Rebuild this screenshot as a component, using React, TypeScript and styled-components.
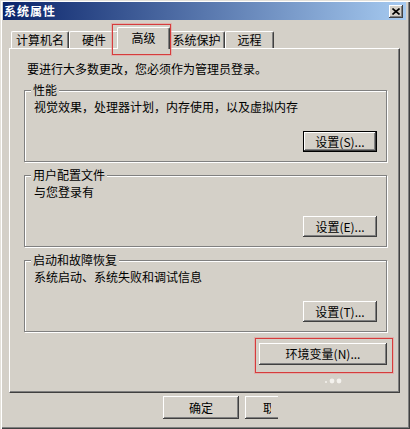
import React from "react";
import styled, { createGlobalStyle, css } from "styled-components";

const FONT = `"Noto Sans CJK SC", "Noto Sans", sans-serif`;
const FACE = "#d4d0c8";

const Global = createGlobalStyle`
  html, body { margin: 0; padding: 0; background: ${FACE}; }
  body { font-family: ${FONT}; font-size: 12px; color: #000; }
  #root { width: 410px; height: 429px; }
  * { box-sizing: border-box; }
`;

const Window = styled.div`
  width: 410px;
  height: 429px;
  background: ${FACE};
  padding: 2px 4px 3px 3px;
  display: flex;
  flex-direction: column;
  overflow: hidden;
  box-shadow: inset 1px 1px 0 #e4e1da, inset 2px 2px 0 #fff,
    inset -1px -1px 0 #404040, inset -2px -2px 0 #808080;
`;

const TitleBar = styled.div`
  height: 18px;
  display: flex;
  align-items: center;
  justify-content: space-between;
  padding: 0 3px 0 1px;
  background: linear-gradient(to right, #0a246a, #a6caf0);
`;

const Title = styled.span`
  color: #fff;
  font-weight: 700;
  font-size: 12px;
  letter-spacing: 1px;
  line-height: 18px;
`;

const CloseBtn = styled.div`
  width: 14px;
  height: 13px;
  background: ${FACE};
  display: flex;
  align-items: center;
  justify-content: center;
  box-shadow: inset -1px -1px 0 #404040, inset 1px 1px 0 #fff,
    inset -2px -2px 0 #808080;
`;

const Body = styled.div`
  display: flex;
  flex-direction: column;
  padding: 7px 6px 0 6px;
`;

const TabStrip = styled.div`
  display: flex;
  align-items: flex-end;
  height: 21px;
  padding-left: 2px;
  position: relative;
  z-index: 1;
`;

const Tab = styled.div<{ $w: number; $active?: boolean; $highlight?: boolean }>`
  position: relative;
  width: ${(p) => p.$w}px;
  height: 17px;
  background: ${FACE};
  border-top: 1px solid #fff;
  border-left: 1px solid #fff;
  border-right: 1px solid #404040;
  border-radius: 2px 2px 0 0;
  box-shadow: inset -1px 0 0 #808080;
  text-align: center;
  line-height: 14px;
  padding-top: 1px;
  white-space: nowrap;
  ${(p) =>
    p.$active &&
    css`
      height: 22px;
      margin: 0 -2px -1px -2px;
      width: ${p.$w + 4}px;
      padding-top: 3px;
      z-index: 2;
    `}
  ${(p) =>
    p.$highlight &&
    css`
      &::after {
        content: "";
        position: absolute;
        top: -4px;
        right: -2px;
        bottom: -6px;
        left: -6px;
        border: 1px solid #d63c3c;
        box-shadow: 0 0 0 1px rgba(236, 140, 140, 0.45);
        pointer-events: none;
      }
    `}
`;

const Panel = styled.div`
  height: 345px;
  border-top: 1px solid #fff;
  border-left: 1px solid #fff;
  border-right: 1px solid #404040;
  border-bottom: 1px solid #404040;
  box-shadow: inset -1px -1px 0 #808080;
  padding: 13px 12px 0 14px;
  display: flex;
  flex-direction: column;
`;

const Notice = styled.div`
  margin-left: 3px;
  line-height: 14px;
`;

const Group = styled.div<{ $gap: number }>`
  position: relative;
  height: 72px;
  margin-top: ${(p) => p.$gap}px;
  border: 1px solid #808080;
  box-shadow: inset 1px 1px 0 #fff, 1px 1px 0 #fff;
  padding: 9px;
  display: flex;
  flex-direction: column;
`;

const Legend = styled.span`
  position: absolute;
  top: -8px;
  left: 6px;
  padding: 0 2px;
  background: ${FACE};
  line-height: 14px;
`;

const Desc = styled.div`
  line-height: 14px;
`;

const ButtonRow = styled.div<{ $top?: number }>`
  display: flex;
  justify-content: flex-end;
  margin-top: ${(p) => (p.$top === undefined ? "auto" : `${p.$top}px`)};
`;

const Button = styled.button<{ $w: number; $h: number; $default?: boolean; $start?: boolean }>`
  width: ${(p) => p.$w}px;
  height: ${(p) => p.$h}px;
  flex: none;
  font-family: ${FONT};
  font-size: 12px;
  line-height: 14px;
  color: #000;
  background: ${FACE};
  border: none;
  padding: 0;
  display: flex;
  align-items: center;
  justify-content: ${(p) => (p.$start ? "flex-start" : "center")};
  white-space: nowrap;
  box-shadow: inset -1px -1px 0 #404040, inset 1px 1px 0 #fff,
    inset -2px -2px 0 #808080;
  ${(p) =>
    p.$default &&
    css`
      border: 1px solid #000;
    `}
`;

const Highlight = styled.div`
  position: relative;
  display: flex;
  &::after {
    content: "";
    position: absolute;
    top: -5px;
    right: -6px;
    bottom: -8px;
    left: -4px;
    border: 1px solid #d63c3c;
    box-shadow: 0 0 0 1px rgba(236, 140, 140, 0.45);
    pointer-events: none;
  }
`;

const DotsRow = styled.div`
  display: flex;
  justify-content: flex-end;
  margin-top: 13px;
  padding-right: 43px;
`;

const Footer = styled.div`
  display: flex;
  gap: 6px;
  margin-top: 3px;
  padding-left: 154px;
`;

const Clip = styled.div`
  width: 33px;
  height: 23px;
  overflow: hidden;
  display: flex;
`;

const CutLabel = styled.span`
  width: 8px;
  overflow: hidden;
  margin-left: 18px;
  white-space: nowrap;
`;

export default function App() {
  return (
    <>
      <Global />
      <Window>
        <TitleBar>
          <Title>系统属性</Title>
          <CloseBtn>
            <svg width="8" height="7" viewBox="0 0 8 7">
              <path d="M0.5 0.5 L7.5 6.5 M7.5 0.5 L0.5 6.5" stroke="#000" strokeWidth="1.6" />
            </svg>
          </CloseBtn>
        </TitleBar>
        <Body>
          <TabStrip>
            <Tab $w={58}>计算机名</Tab>
            <Tab $w={50}>硬件</Tab>
            <Tab $w={49} $active $highlight>
              高级
            </Tab>
            <Tab $w={57}>系统保护</Tab>
            <Tab $w={49}>远程</Tab>
          </TabStrip>
          <Panel>
            <Notice>要进行大多数更改，您必须作为管理员登录。</Notice>
            <Group $gap={14}>
              <Legend>性能</Legend>
              <Desc>视觉效果，处理器计划，内存使用，以及虚拟内存</Desc>
              <ButtonRow>
                <Button $w={74} $h={21} $default>
                  设置(S)...
                </Button>
              </ButtonRow>
            </Group>
            <Group $gap={13}>
              <Legend>用户配置文件</Legend>
              <Desc>与您登录有</Desc>
              <ButtonRow>
                <Button $w={74} $h={21}>
                  设置(E)...
                </Button>
              </ButtonRow>
            </Group>
            <Group $gap={13}>
              <Legend>启动和故障恢复</Legend>
              <Desc>系统启动、系统失败和调试信息</Desc>
              <ButtonRow>
                <Button $w={74} $h={21}>
                  设置(T)...
                </Button>
              </ButtonRow>
            </Group>
            <ButtonRow $top={11}>
              <Highlight>
                <Button $w={128} $h={22}>
                  环境变量(N)...
                </Button>
              </Highlight>
            </ButtonRow>
            <DotsRow>
              <svg width="20" height="6" viewBox="0 0 20 6">
                <circle cx="2" cy="4" r="1" fill="#f4f2ee" />
                <circle cx="8" cy="3" r="2.4" fill="#f4f2ee" />
                <circle cx="15" cy="3" r="2.4" fill="#f4f2ee" />
              </svg>
            </DotsRow>
          </Panel>
          <Footer>
            <Button $w={76} $h={23}>
              确定
            </Button>
            <Clip>
              <Button $w={76} $h={23} $start>
                <CutLabel>取消</CutLabel>
              </Button>
            </Clip>
          </Footer>
        </Body>
      </Window>
    </>
  );
}
